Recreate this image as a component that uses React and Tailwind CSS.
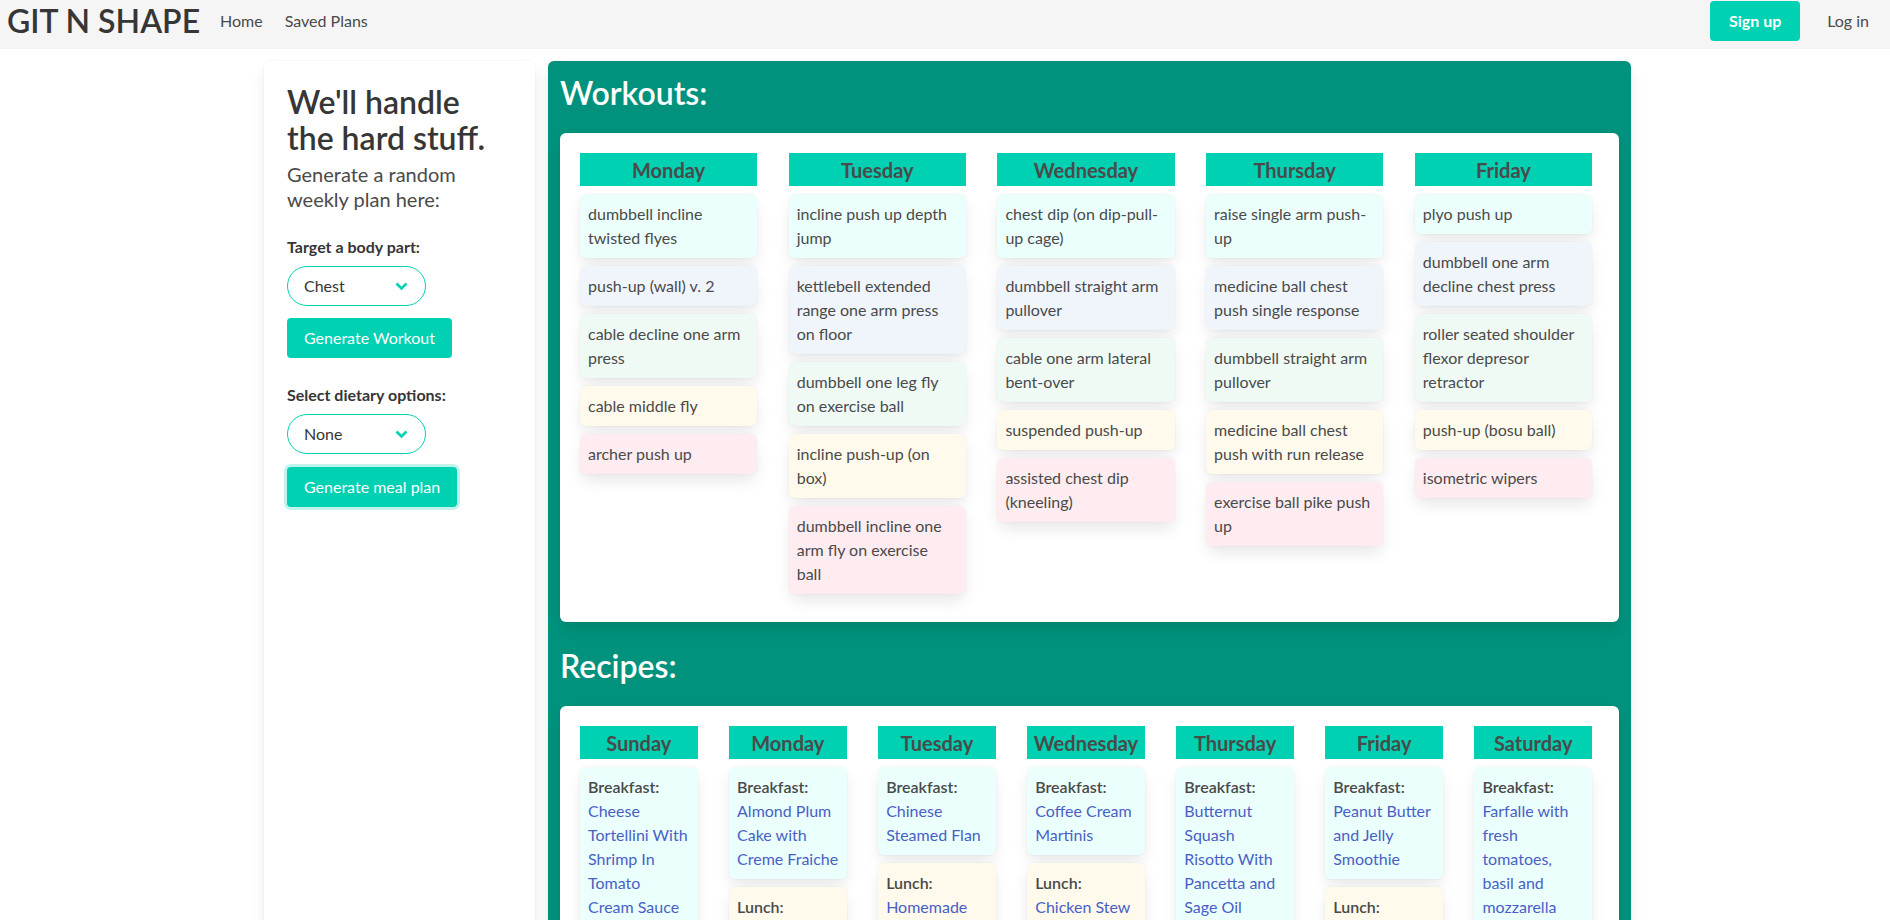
import React from 'react';

const cardColors = ['bg-[#ebfffc]', 'bg-[#eff5fb]', 'bg-[#effaf5]', 'bg-[#fffaeb]', 'bg-[#feecf0]'];

const boxShadow = 'shadow-[0_0.5em_1em_-0.125em_rgba(10,10,10,0.1),0_0_0_1px_rgba(10,10,10,0.02)]';

const workouts = [
  { day: 'Monday', items: ['dumbbell incline twisted flyes', 'push-up (wall) v. 2', 'cable decline one arm press', 'cable middle fly', 'archer push up'] },
  { day: 'Tuesday', items: ['incline push up depth jump', 'kettlebell extended range one arm press on floor', 'dumbbell one leg fly on exercise ball', 'incline push-up (on box)', 'dumbbell incline one arm fly on exercise ball'] },
  { day: 'Wednesday', items: ['chest dip (on dip-pull-up cage)', 'dumbbell straight arm pullover', 'cable one arm lateral bent-over', 'suspended push-up', 'assisted chest dip (kneeling)'] },
  { day: 'Thursday', items: ['raise single arm push-up', 'medicine ball chest push single response', 'dumbbell straight arm pullover', 'medicine ball chest push with run release', 'exercise ball pike push up'] },
  { day: 'Friday', items: ['plyo push up', 'dumbbell one arm decline chest press', 'roller seated shoulder flexor depresor retractor', 'push-up (bosu ball)', 'isometric wipers'] },
];

const recipes = [
  { day: 'Sunday', breakfast: 'Cheese Tortellini With Shrimp In Tomato Cream Sauce', lunch: 'Quinoa Salad with Avocado', dinner: 'Garlic Butter Salmon' },
  { day: 'Monday', breakfast: 'Almond Plum Cake with Creme Fraiche', lunch: 'Greek Chicken Wraps', dinner: 'Beef and Broccoli Stir Fry' },
  { day: 'Tuesday', breakfast: 'Chinese Steamed Flan', lunch: 'Homemade Tomato Soup', dinner: 'Lemon Herb Chicken' },
  { day: 'Wednesday', breakfast: 'Coffee Cream Martinis', lunch: 'Chicken Stew with Dumplings', dinner: 'Shrimp Fried Rice' },
  { day: 'Thursday', breakfast: 'Butternut Squash Risotto With Pancetta and Sage Oil', lunch: 'Turkey Club Sandwich', dinner: 'Spaghetti Bolognese' },
  { day: 'Friday', breakfast: 'Peanut Butter and Jelly Smoothie', lunch: 'Caprese Panini', dinner: 'Fish Tacos' },
  { day: 'Saturday', breakfast: 'Farfalle with fresh tomatoes, basil and mozzarella', lunch: 'Black Bean Burgers', dinner: 'Roast Pork Tenderloin' },
];

const Chevron = () => (
  <svg width="13" height="9" viewBox="0 0 13 9" className="shrink-0">
    <path d="M1.5 1.5 L6.5 6.5 L11.5 1.5" fill="none" stroke="#00d1b2" strokeWidth="2.6" />
  </svg>
);

const Select = ({ value }) => (
  <div className="w-[139px] h-[40px] rounded-full border border-[#00d1b2] bg-white flex items-center justify-between pl-[16px] pr-[17px] text-[16px] text-[#363636]">
    <span>{value}</span>
    <Chevron />
  </div>
);

const DayHeader = ({ day }) => (
  <div className="h-[33px] bg-[#00d1b2] flex items-center justify-center text-[20px] font-bold text-[#4a4a4a]">
    {day}
  </div>
);

const App = () => {
  return (
    <div className="min-h-screen bg-white font-[Lato,sans-serif] text-[16px] leading-[24px] text-[#4a4a4a]">
      {/* Navbar */}
      <nav className="h-[49px] bg-[#f5f5f5] flex items-start justify-between">
        <div className="h-[42px] flex items-center">
          <span className="pl-[7px] text-[32px] font-semibold text-[#363636] leading-none">GIT N SHAPE</span>
          <a className="ml-[20px]">Home</a>
          <a className="ml-[22px]">Saved Plans</a>
        </div>
        <div className="flex items-start pr-[21px]">
          <button className="mt-[1px] h-[40px] w-[90px] rounded-[4px] bg-[#00d1b2] text-white font-bold">Sign up</button>
          <span className="ml-[27px] h-[42px] flex items-center">Log in</span>
        </div>
      </nav>

      <div className="flex items-start gap-[13px] pl-[264px] pt-[12px] pb-10">
        {/* Sidebar */}
        <aside className={`w-[271px] min-h-[1000px] bg-white rounded-[6px] ${boxShadow} pt-[23px] px-[23px]`}>
          <h1 className="w-[210px] text-[32px] leading-[36px] font-semibold text-[#363636]">We'll handle the hard stuff.</h1>
          <p className="mt-[6px] text-[20px] leading-[25px] text-[#4a4a4a]">Generate a random weekly plan here:</p>

          <label className="block mt-[23px] font-bold text-[#363636]">Target a body part:</label>
          <div className="mt-[7px]"><Select value="Chest" /></div>
          <button className="mt-[12px] h-[40px] px-[17px] rounded-[4px] bg-[#00d1b2] text-white">Generate Workout</button>

          <label className="block mt-[25px] font-bold text-[#363636]">Select dietary options:</label>
          <div className="mt-[7px]"><Select value="None" /></div>
          <button className="mt-[13px] h-[40px] px-[17px] rounded-[4px] bg-[#00d1b2] text-white shadow-[0_0_0_3px_rgba(0,209,178,0.25)]">Generate meal plan</button>
        </aside>

        {/* Main panel */}
        <main className={`w-[1083px] bg-[#00927c] rounded-[6px] ${boxShadow} px-[12px] pt-[14px] pb-[24px]`}>
          <h2 className="text-[32px] leading-[36px] font-semibold text-white">Workouts:</h2>
          <div className={`mt-[22px] bg-white rounded-[6px] ${boxShadow} pt-[20px] pl-[20px] pr-[27px] pb-[28px]`}>
            <div className="grid grid-cols-5 gap-x-[31.5px] items-start">
              {workouts.map((w) => (
                <div key={w.day} className="flex flex-col gap-[8px]">
                  <DayHeader day={w.day} />
                  {w.items.map((item, i) => (
                    <div key={item} className={`${cardColors[i]} rounded-[6px] ${boxShadow} py-[8px] pl-[8px] pr-[11px]`}>
                      {item}
                    </div>
                  ))}
                </div>
              ))}
            </div>
          </div>

          <h2 className="mt-[26px] text-[32px] leading-[36px] font-semibold text-white">Recipes:</h2>
          <div className={`mt-[22px] bg-white rounded-[6px] ${boxShadow} pt-[20px] pl-[20px] pr-[27px] pb-[28px]`}>
            <div className="grid grid-cols-7 gap-x-[31.5px] items-start">
              {recipes.map((r) => (
                <div key={r.day} className="flex flex-col gap-[8px]">
                  <DayHeader day={r.day} />
                  <div className={`bg-[#ebfffc] rounded-[6px] ${boxShadow} p-[8px]`}>
                    <p className="font-semibold">Breakfast:</p>
                    <a className="text-[#485fc7]">{r.breakfast}</a>
                  </div>
                  <div className={`bg-[#fffaeb] rounded-[6px] ${boxShadow} p-[8px]`}>
                    <p className="font-semibold">Lunch:</p>
                    <a className="text-[#485fc7]">{r.lunch}</a>
                  </div>
                  <div className={`bg-[#feecf0] rounded-[6px] ${boxShadow} p-[8px]`}>
                    <p className="font-semibold">Dinner:</p>
                    <a className="text-[#485fc7]">{r.dinner}</a>
                  </div>
                </div>
              ))}
            </div>
          </div>
        </main>
      </div>
    </div>
  );
};

export default App;
